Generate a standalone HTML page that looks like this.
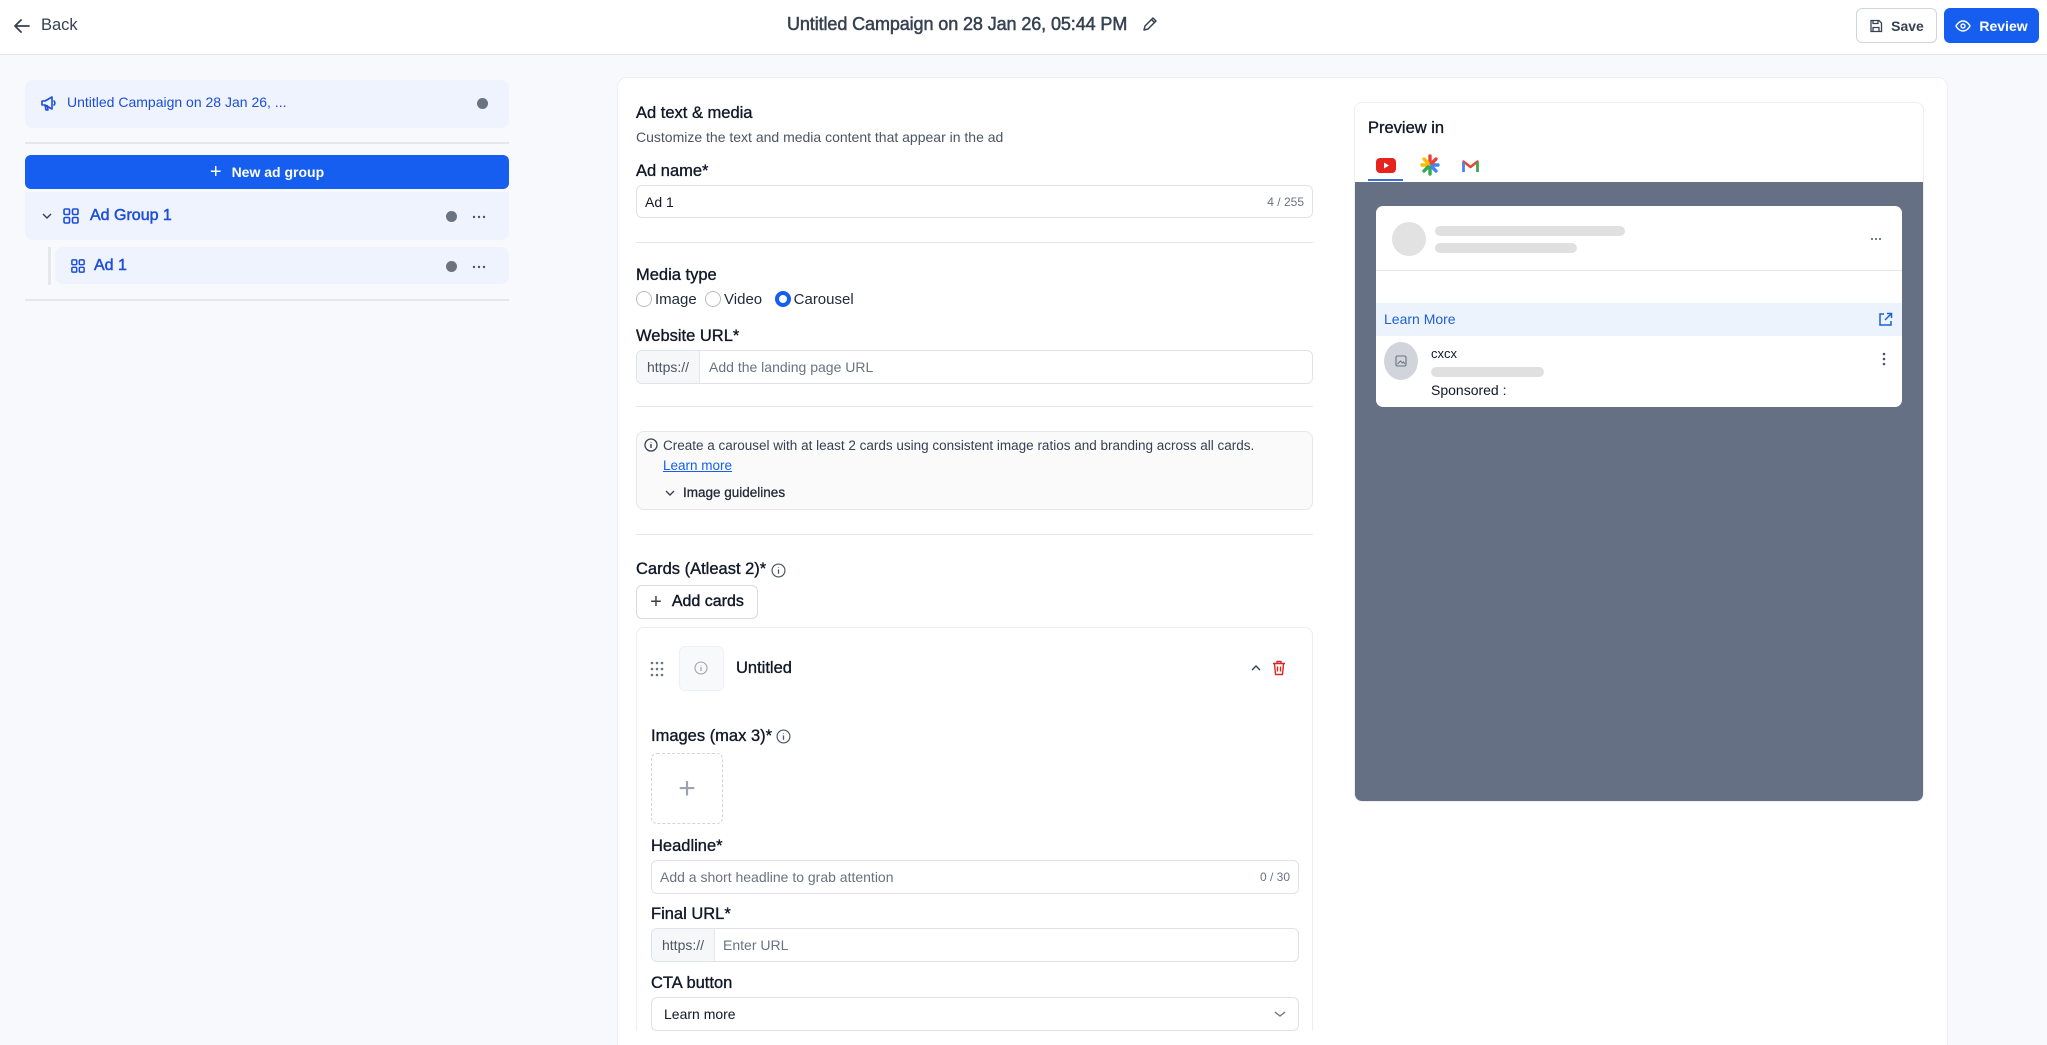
<!DOCTYPE html>
<html><head><meta charset="utf-8"><style>
*{box-sizing:border-box;margin:0;padding:0}
html{width:2047px;height:1045px;overflow:hidden}
body{width:2047px;height:1045px;overflow:hidden;background:#f8f9fc;font-family:"Liberation Sans",sans-serif;color:#111827;position:relative}
.a{position:absolute}
.hdr{left:0;top:0;width:2047px;height:55px;background:#fff;border-bottom:1px solid #e5e7eb}
.lbl{font-size:16.5px;color:#111827;-webkit-text-stroke:0.35px #111827;white-space:nowrap}
.inp{border:1px solid #dfe2e7;border-radius:6px;background:#fff;font-size:14px;color:#6b7280;display:flex;align-items:center}
.hr{height:1px;background:#e5e7eb}
.pre{height:100%;background:#f6f7f9;border-right:1px solid #e5e7eb;padding:0 10px;display:flex;align-items:center;color:#4b5563;border-radius:6px 0 0 6px}
.radio{width:16px;height:16px;border:1px solid #b8bcc4;border-radius:50%;display:inline-block;vertical-align:-3px;margin-right:3px}
.dot{width:11px;height:11px;border-radius:50%;background:#6b7280}
.bar{background:#e0e0e0;border-radius:6px;height:10px}
</style></head><body>
<div class="a hdr"></div>
<svg class="a" style="left:12px;top:16px" width="20" height="20" viewBox="0 0 20 20"><path d="M17 10H3M9 4l-6 6 6 6" fill="none" stroke="#374151" stroke-width="1.8" stroke-linecap="round" stroke-linejoin="round"/></svg>
<div class="a" style="left:41px;top:16px;font-size:16.5px;color:#374151">Back</div>
<div class="a" style="left:787px;top:14px;font-size:18px;color:#374151;-webkit-text-stroke:0.5px #374151;white-space:nowrap;letter-spacing:-0.1px">Untitled Campaign on 28 Jan 26, 05:44 PM</div>
<svg class="a" style="left:1141px;top:15px" width="18" height="18" viewBox="0 0 18 18"><path d="M3 15l1-4 8-8 3 3-8 8zM10.5 4.5l3 3" fill="none" stroke="#374151" stroke-width="1.5" stroke-linejoin="round"/></svg>
<div class="a" style="left:1856px;top:8px;width:81px;height:35px;border:1px solid #d1d5db;border-radius:6px;background:#fff;font-size:14px;font-weight:600;color:#374151;display:flex;align-items:center;justify-content:center;gap:8px"><svg width="14" height="14" viewBox="0 0 14 14"><path d="M2 1.5h8l2.5 2.5v8.5h-10.5zM4 1.5v3h5v-3M4 12.5v-4h6v4" fill="none" stroke="#374151" stroke-width="1.3"/></svg>Save</div>
<div class="a" style="left:1944px;top:8px;width:95px;height:35px;border-radius:6px;background:#155eef;font-size:14px;font-weight:600;color:#fff;display:flex;align-items:center;justify-content:center;gap:8px"><svg width="16" height="14" viewBox="0 0 16 14"><path d="M1 7s2.5-5 7-5 7 5 7 5-2.5 5-7 5-7-5-7-5z" fill="none" stroke="#fff" stroke-width="1.4"/><circle cx="8" cy="7" r="2" fill="none" stroke="#fff" stroke-width="1.4"/></svg>Review</div>

<!-- sidebar -->
<div class="a" style="left:25px;top:80px;width:484px;height:48px;background:#eef3fd;border-radius:8px"></div>
<svg class="a" style="left:40px;top:94px" width="18" height="18" viewBox="0 0 18 18"><path d="M2 7h3l7-4v12l-7-4H2zM5 11l1 5h2l-1-5M13.5 6.5a3 3 0 010 5" fill="none" stroke="#1d4ed8" stroke-width="1.6" stroke-linejoin="round"/></svg>
<div class="a" style="left:67px;top:94px;font-size:14px;color:#1d4ed8">Untitled Campaign on 28 Jan 26, ...</div>
<div class="a dot" style="left:477px;top:98px"></div>
<div class="a hr" style="left:25px;top:142px;width:484px;height:2px"></div>
<div class="a" style="left:25px;top:155px;width:484px;height:34px;background:#155eef;border-radius:6px;color:#fff;font-size:14px;font-weight:600;display:flex;align-items:center;justify-content:center;gap:10px"><span style="font-size:20px;font-weight:400">+</span>New ad group</div>
<div class="a" style="left:25px;top:192px;width:484px;height:48px;background:#eef3fd;border-radius:0 0 8px 8px"></div>
<svg class="a" style="left:42px;top:212px" width="10" height="8" viewBox="0 0 10 8"><path d="M1 2l4 4 4-4" fill="none" stroke="#374151" stroke-width="1.4"/></svg>
<svg class="a" style="left:63px;top:208px" width="16" height="16" viewBox="0 0 16 16"><g fill="none" stroke="#1d4ed8" stroke-width="1.6"><rect x="1" y="1" width="5.5" height="5.5" rx="1.2"/><rect x="9.5" y="1" width="5.5" height="5.5" rx="1.2"/><rect x="1" y="9.5" width="5.5" height="5.5" rx="1.2"/><rect x="9.5" y="9.5" width="5.5" height="5.5" rx="1.2"/></g></svg>
<div class="a" style="left:90px;top:207px;font-size:16px;color:#1d4ed8;-webkit-text-stroke:0.5px #1d4ed8">Ad Group 1</div>
<div class="a dot" style="left:446px;top:211px"></div>
<svg class="a" style="left:472px;top:215px" width="14" height="4" viewBox="0 0 14 4"><g fill="#4b5563"><circle cx="2" cy="2" r="1.2"/><circle cx="7" cy="2" r="1.2"/><circle cx="12" cy="2" r="1.2"/></g></svg>
<div class="a" style="left:48px;top:247px;width:3px;height:38px;background:#e5e7eb"></div>
<div class="a" style="left:55px;top:247px;width:454px;height:37px;background:#eef3fd;border-radius:8px"></div>
<svg class="a" style="left:71px;top:259px" width="14" height="14" viewBox="0 0 16 16"><g fill="none" stroke="#1d4ed8" stroke-width="1.7"><rect x="1" y="1" width="5.5" height="5.5" rx="1.2"/><rect x="9.5" y="1" width="5.5" height="5.5" rx="1.2"/><rect x="1" y="9.5" width="5.5" height="5.5" rx="1.2"/><rect x="9.5" y="9.5" width="5.5" height="5.5" rx="1.2"/></g></svg>
<div class="a" style="left:94px;top:257px;font-size:16px;color:#1d4ed8;-webkit-text-stroke:0.5px #1d4ed8">Ad 1</div>
<div class="a dot" style="left:446px;top:261px"></div>
<svg class="a" style="left:472px;top:265px" width="14" height="4" viewBox="0 0 14 4"><g fill="#4b5563"><circle cx="2" cy="2" r="1.2"/><circle cx="7" cy="2" r="1.2"/><circle cx="12" cy="2" r="1.2"/></g></svg>
<div class="a hr" style="left:25px;top:299px;width:484px;height:2px"></div>

<!-- main panel -->
<div class="a" style="left:617px;top:77px;width:1331px;height:968px;background:#fff;border:1px solid #eceef2;border-bottom:none;border-radius:10px 10px 0 0"></div>
<div class="a lbl" style="left:636px;top:104px">Ad text &amp; media</div>
<div class="a" style="left:636px;top:129px;font-size:14px;color:#4b5563">Customize the text and media content that appear in the ad</div>
<div class="a lbl" style="left:636px;top:162px">Ad name*</div>
<div class="a inp" style="left:636px;top:185px;width:677px;height:33px;padding:0 8px;color:#111827;justify-content:space-between"><span>Ad 1</span><span style="font-size:12px;color:#6b7280">4 / 255</span></div>
<div class="a hr" style="left:636px;top:242px;width:677px"></div>
<div class="a lbl" style="left:636px;top:266px">Media type</div>
<div class="a" style="left:636px;top:291px;font-size:15px;color:#1f2937;white-space:nowrap"><span class="radio"></span>Image&nbsp;&nbsp;<span class="radio"></span>Video&nbsp;&nbsp;&nbsp;<span class="radio" style="border:4.5px solid #155eef"></span>Carousel</div>
<div class="a lbl" style="left:636px;top:327px">Website URL*</div>
<div class="a inp" style="left:636px;top:350px;width:677px;height:34px"><div class="pre">https://</div><span style="padding-left:9px">Add the landing page URL</span></div>
<div class="a hr" style="left:636px;top:406px;width:677px"></div>
<div class="a" style="left:636px;top:431px;width:677px;height:79px;background:#fafafa;border:1px solid #e5e7eb;border-radius:8px"></div>
<svg class="a" style="left:644px;top:438px" width="14" height="14" viewBox="0 0 14 14"><circle cx="7" cy="7" r="6" fill="none" stroke="#374151" stroke-width="1.3"/><path d="M7 6v4M7 4v.5" stroke="#374151" stroke-width="1.4"/></svg>
<div class="a" style="left:663px;top:438px;font-size:13.5px;color:#374151;white-space:nowrap">Create a carousel with at least 2 cards using consistent image ratios and branding across all cards.</div>
<div class="a" style="left:663px;top:458px;font-size:13.5px;color:#155eef;text-decoration:underline">Learn more</div>
<svg class="a" style="left:665px;top:489px" width="10" height="8" viewBox="0 0 10 8"><path d="M1 2l4 4 4-4" fill="none" stroke="#374151" stroke-width="1.4"/></svg>
<div class="a" style="left:683px;top:485px;font-size:13.5px;color:#1f2937;-webkit-text-stroke:0.3px #1f2937">Image guidelines</div>
<div class="a hr" style="left:636px;top:534px;width:677px"></div>
<div class="a lbl" style="left:636px;top:560px">Cards (Atleast 2)*</div>
<svg class="a" style="left:771px;top:563px" width="15" height="15" viewBox="0 0 14 14"><circle cx="7" cy="7" r="6" fill="none" stroke="#4b5563" stroke-width="1.1"/><path d="M7 6v4M7 4v.5" stroke="#4b5563" stroke-width="1.2"/></svg>
<div class="a" style="left:636px;top:585px;width:122px;height:34px;border:1px solid #d8dbe0;border-radius:6px;font-size:16px;display:flex;align-items:center;justify-content:center;gap:10px;color:#111827;-webkit-text-stroke:0.4px #111827"><span style="font-size:20px;color:#374151;-webkit-text-stroke:0">+</span>Add cards</div>
<div class="a" style="left:636px;top:627px;width:677px;height:418px;border:1px solid #eceef2;border-bottom:none;border-radius:8px 8px 0 0"></div>
<svg class="a" style="left:650px;top:661px" width="14" height="16" viewBox="0 0 14 16"><g fill="#6b7280"><circle cx="2" cy="2" r="1.3"/><circle cx="7" cy="2" r="1.3"/><circle cx="12" cy="2" r="1.3"/><circle cx="2" cy="8" r="1.3"/><circle cx="7" cy="8" r="1.3"/><circle cx="12" cy="8" r="1.3"/><circle cx="2" cy="14" r="1.3"/><circle cx="7" cy="14" r="1.3"/><circle cx="12" cy="14" r="1.3"/></g></svg>
<div class="a" style="left:679px;top:646px;width:45px;height:45px;background:#f8f9fb;border:1px solid #eef0f3;border-radius:6px"></div>
<svg class="a" style="left:694px;top:661px" width="14" height="14" viewBox="0 0 14 14"><circle cx="7" cy="7" r="6" fill="none" stroke="#9ca3af" stroke-width="1.1"/><path d="M7 6v4M7 4v.5" stroke="#9ca3af" stroke-width="1.2"/></svg>
<div class="a lbl" style="left:736px;top:659px">Untitled</div>
<svg class="a" style="left:1251px;top:664px" width="10" height="8" viewBox="0 0 10 8"><path d="M1 6l4-4 4 4" fill="none" stroke="#374151" stroke-width="1.4"/></svg>
<svg class="a" style="left:1272px;top:660px" width="14" height="16" viewBox="0 0 14 16"><path d="M1 3.5h12M5 3.5V1.5h4v2M2.5 3.5l1 11h7l1-11M5.5 6.5v5M8.5 6.5v5" fill="none" stroke="#dc2626" stroke-width="1.4" stroke-linejoin="round"/></svg>
<div class="a lbl" style="left:651px;top:727px">Images (max 3)*</div>
<svg class="a" style="left:776px;top:729px" width="15" height="15" viewBox="0 0 14 14"><circle cx="7" cy="7" r="6" fill="none" stroke="#4b5563" stroke-width="1.1"/><path d="M7 6v4M7 4v.5" stroke="#4b5563" stroke-width="1.2"/></svg>
<div class="a" style="left:651px;top:753px;width:72px;height:71px;border:1.5px dashed #d1d5db;border-radius:6px;display:flex;align-items:center;justify-content:center;font-size:30px;color:#9ca3af;font-weight:300">+</div>
<div class="a lbl" style="left:651px;top:837px">Headline*</div>
<div class="a inp" style="left:651px;top:860px;width:648px;height:34px;padding:0 8px;justify-content:space-between"><span>Add a short headline to grab attention</span><span style="font-size:12px">0 / 30</span></div>
<div class="a lbl" style="left:651px;top:905px">Final URL*</div>
<div class="a inp" style="left:651px;top:928px;width:648px;height:34px"><div class="pre">https://</div><span style="padding-left:8px">Enter URL</span></div>
<div class="a lbl" style="left:651px;top:974px">CTA button</div>
<div class="a inp" style="left:651px;top:997px;width:648px;height:34px;padding:0 12px;color:#111827;justify-content:space-between"><span>Learn more</span><svg width="12" height="8" viewBox="0 0 12 8"><path d="M1 2l5 4 5-4" fill="none" stroke="#6b7280" stroke-width="1.3"/></svg></div>
<div class="a" style="left:618px;top:1031px;width:1329px;height:14px;background:#fff"></div>

<!-- preview -->
<div class="a" style="left:1354px;top:102px;width:570px;height:700px;background:#fff;border:1px solid #eceef2;border-radius:8px;overflow:hidden">
 <div class="a" style="left:0;top:79px;width:570px;height:621px;background:#667085"></div>
</div>
<div class="a lbl" style="left:1368px;top:119px">Preview in</div>
<svg class="a" style="left:1376px;top:158px" width="20" height="15" viewBox="0 0 20 15"><rect width="20" height="15" rx="4" fill="#e52420"/><path d="M8 4.5l5 3-5 3z" fill="#fff"/></svg>
<div class="a" style="left:1368px;top:179px;width:35px;height:2px;background:#3b6fd8"></div>
<svg class="a" style="left:1420px;top:154px" width="20" height="22" viewBox="0 0 20 22"><g stroke-width="3.4" stroke-linecap="round"><path d="M10 2v7" stroke="#ea4335"/><path d="M10 13v7" stroke="#34a853"/><path d="M2 11h6" stroke="#fbbc04"/><path d="M12 11h6" stroke="#4285f4"/><path d="M4 5l4 4" stroke="#fbbc04"/><path d="M16 5l-4 4" stroke="#ea4335"/><path d="M4 17l4-4" stroke="#34a853"/><path d="M16 17l-4-4" stroke="#4285f4"/></g></svg>
<svg class="a" style="left:1462px;top:159px" width="17" height="14" viewBox="0 0 17 14"><path d="M1.5 13V2.5l7 5.5 7-5.5V13" fill="none" stroke="#ea4335" stroke-width="2.4" stroke-linejoin="round"/><path d="M1.5 13V3" stroke="#4285f4" stroke-width="2.6"/><path d="M15.5 13V3" stroke="#34a853" stroke-width="2.6"/></svg>
<div class="a" style="left:1376px;top:206px;width:526px;height:201px;background:#fff;border-radius:7px;overflow:hidden">
 <div class="a" style="left:16px;top:16px;width:34px;height:34px;border-radius:50%;background:#e2e2e2"></div>
 <div class="a bar" style="left:59px;top:20px;width:190px"></div>
 <div class="a bar" style="left:59px;top:37px;width:142px"></div>
 <svg class="a" style="left:494px;top:31px" width="12" height="4" viewBox="0 0 12 4"><g fill="#4b5563"><circle cx="2" cy="2" r="1"/><circle cx="6" cy="2" r="1"/><circle cx="10" cy="2" r="1"/></g></svg>
 <div class="a hr" style="left:0;top:64px;width:526px"></div>
 <div class="a" style="left:0;top:97px;width:526px;height:33px;background:#edf3fd"></div>
 <div class="a" style="left:8px;top:105px;font-size:14px;color:#1d5fd6">Learn More</div>
 <svg class="a" style="left:502px;top:106px" width="15" height="15" viewBox="0 0 15 15"><path d="M6 2H2v11h11V9M9 1.5h4.5V6M13.5 1.5L7 8" fill="none" stroke="#1d5fd6" stroke-width="1.5"/></svg>
 <div class="a" style="left:8px;top:136px;width:34px;height:38px;border-radius:50%;background:#d1d5db"></div>
 <svg class="a" style="left:19px;top:149px" width="12" height="12" viewBox="0 0 12 12"><rect x="1" y="1" width="10" height="10" rx="1.5" fill="none" stroke="#6b7280" stroke-width="1.1"/><path d="M2.5 9l3-3 2 2 1-1 1.5 2" fill="none" stroke="#6b7280" stroke-width="1"/></svg>
 <div class="a" style="left:55px;top:140px;font-size:13px;color:#111827">cxcx</div>
 <div class="a bar" style="left:55px;top:161px;width:113px"></div>
 <div class="a" style="left:55px;top:176px;font-size:14px;color:#111827">Sponsored :</div>
 <svg class="a" style="left:506px;top:146px" width="4" height="14" viewBox="0 0 4 14"><g fill="#4b5563"><circle cx="2" cy="2" r="1.3"/><circle cx="2" cy="7" r="1.3"/><circle cx="2" cy="12" r="1.3"/></g></svg>
</div>
</body></html>
